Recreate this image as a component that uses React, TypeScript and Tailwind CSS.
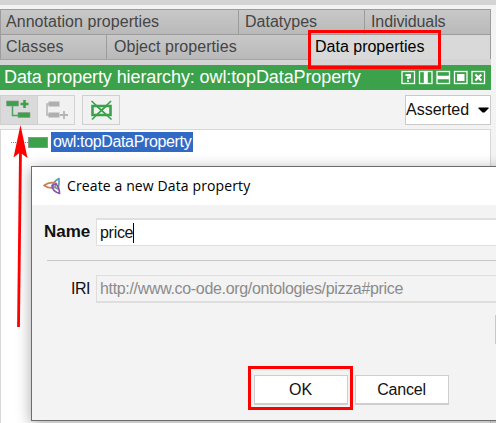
import type { ReactNode } from "react";

function Tab({ className, children }: { className: string; children: ReactNode }) {
  return (
    <div className={`h-full shrink-0 border-t border-l border-[#9c9c9c] bg-linear-to-b from-[#c8c8c8] to-[#b9b9b9] pl-[5px] leading-[24px] whitespace-nowrap text-[#454545] ${className}`}>
      {children}
    </div>
  );
}

function HeaderIcons() {
  return (
    <svg className="mr-[4px] h-[15px] w-[86px] shrink-0" viewBox="0 0 86 15" fill="none" stroke="#fff">
      {[0.5, 18, 35.5, 53, 70.5].map((x) => (
        <rect key={x} x={x + 0.5} y="1.500" width="12.500" height="12" strokeWidth="1.3" />
      ))}
      <path d="M4.500 5h4.500v2.500H7v1.800M7 10.300v1.800" strokeWidth="1.9" />
      <path d="M24.800 2v11" strokeWidth="4" />
      <path d="M36 7.500h12.500" strokeWidth="3.500" />
      <rect x="56.500" y="4.500" width="6.500" height="6" fill="#fff" />
      <path d="M74.300 4.500l6 6m0-6l-6 6" strokeWidth="2.200" />
    </svg>
  );
}

function Toolbar() {
  return (
    <div className="flex h-[39px] shrink-0 items-start bg-[#f3f3f3] pt-[5px]">
      <button className="h-[30px] w-[38px] border border-[#cfcfcf] bg-[#dadada]">
        <svg className="h-[28px] w-[36px]" viewBox="1 96 36 28" fill="none">
          <path d="M12.500 106v9.500H19" stroke="#4da55c" strokeWidth="1.500" />
          <path d="M6.500 101h12v5h-12zM18 112.500h12v5H18z" fill="#3ba14b" stroke="#8c978d" strokeWidth=".6" />
          <path d="M24.500 100v8M20.500 104h8" stroke="#3ba14b" strokeWidth="2.600" />
        </svg>
      </button>
      <button className="h-[30px] w-[37px] border border-l-0 border-[#d2d2d2] bg-[#f1f1f1]">
        <svg className="h-[28px] w-[36px]" viewBox="38 96 36 28" fill="none">
          <path d="M50 104h-3v11h3" stroke="#b4b4b4" strokeWidth="1.500" />
          <path d="M48.500 101.500h11v5h-11zM48.500 112.500h11v5h-11z" fill="#afafaf" />
          <path d="M64 111v8M60 115h8" stroke="#b4b4b4" strokeWidth="1.800" />
        </svg>
      </button>
      <button className="ml-[7px] h-[30px] w-[38px] border border-[#cfcfcf] bg-[#f1f1f1]">
        <svg className="h-[28px] w-[36px]" viewBox="83 96 36 28" fill="none" stroke="#3ba14b">
          <path d="M92.500 106h18v9h-18z" strokeWidth="2.600" />
          <path d="M97 106.500l4.500 4-4.500 4M106 106.500l-4.500 4 4.500 4" strokeWidth="1.300" />
          <path d="M91.500 101l20 18.500M111 101l-19 18.500" strokeWidth="1.700" />
        </svg>
      </button>
      <div className="ml-auto flex h-[30px] w-[86px] items-center border border-[#cacaca] bg-white">
        <span className="text-[16px]">Asserted</span>
        <svg className="ml-auto mr-[1px] h-[6px] w-[11px]" viewBox="0 0 11 6">
          <path d="M.500.5h10v1L6.500 5.500h-2L.500 1.500z" />
        </svg>
      </div>
    </div>
  );
}

function CreateDialog() {
  return (
    <div className="absolute top-[166px] left-[31px] h-[255px] w-[480px] border border-[#6c6c6c] bg-[#f3f3f3] shadow-[0_3px_14px_rgba(0,0,0,0.35)]">
      <div className="flex h-[38px] items-center bg-white pl-[11px]">
        <svg className="h-[18px] w-[18px]" viewBox="0 0 18 18" fill="none" strokeWidth="1.700" strokeLinejoin="round">
          <path d="M16 1.500C12.500 3.500 10 6 9.500 9L15 12c1-3.500 1.300-7 1-10.500z" stroke="#5e9bbd" />
          <path d="M1 8.500C5 5.500 9.500 5 13.500 6.500L12 10.500C8 11.500 5 11 1 8.500z" stroke="#c58357" />
          <path d="M16.500 16.500C12 15 9 12 9 8.500l4-1.500c2.500 2.500 3.500 6 3.500 9.500z" stroke="#8955a9" />
        </svg>
        <span className="-mt-[2px] ml-[6px] font-['Open_Sans',sans-serif] text-[14px] tracking-[0.12px] whitespace-nowrap text-black">Create a new Data property</span>
      </div>
      <div className="mt-[13px] flex h-[28px] items-center">
        <span className="w-[58px] text-right text-[17px] font-bold tracking-[-0.1px]">Name</span>
        <div className="ml-[6px] flex h-[28px] flex-1 items-center border border-[#dfdfdf] border-t-2 bg-white pl-[3px] text-[16px]">
          <span className="tracking-[-0.3px]">price</span>
          <span className="h-[20px] w-px bg-black" />
        </div>
      </div>
      <div className="mt-[14px] ml-[15px] h-px bg-[#c8c8c8]" />
      <div className="mt-[14px] flex h-[28px] items-center">
        <span className="w-[58px] text-right text-[16px] tracking-[-0.5px]">IRI</span>
        <div className="ml-[6px] flex h-[28px] flex-1 items-center border border-[#dedede] border-b-2 pl-[3px] text-[16px] text-[#8b8b8b]">
          <span className="tracking-[-0.33px]">http://www.co-ode.org/ontologies/pizza#price</span>
        </div>
      </div>
      <div className="mt-[12px] ml-[463px] h-[29px] w-[16px] border border-[#c8c8c8] bg-[#e0e0e0]" />
      <div className="mt-[22px] flex h-[44px] items-start">
        <div className="ml-[216px] flex h-[44px] w-[105px] justify-center border-[3px] border-[#ff0000] pt-[6px]">
          <button className="h-[30px] w-[94px] border border-b-2 border-[#cecece] bg-white pt-px text-[16px]">OK</button>
        </div>
        <button className="mt-[9px] ml-[1.5px] h-[30px] w-[94px] border border-b-2 border-[#cecece] bg-white pt-px text-[16px] tracking-[-0.2px]">Cancel</button>
      </div>
    </div>
  );
}

export default function App() {
  return (
    <div className="relative flex h-[423px] w-[496px] flex-col overflow-hidden bg-[#f3f3f3] pr-[5px] font-['Liberation_Sans',Arial,sans-serif] text-[#111]">
      <div className="-mr-[5px] h-[5px] shrink-0 bg-[#d4d4d4]" />
      <div className="mt-[4px] flex h-[25px] shrink-0 border-r border-[#9c9c9c] text-[16px]">
        <Tab className="w-[238px]"><span className="tracking-[0.05px]">Annotation properties</span></Tab>
        <Tab className="w-[126px]"><span className="ml-px">Datatypes</span></Tab>
        <Tab className="w-[126px]"><span className="ml-px tracking-[-0.1px]">Individuals</span></Tab>
      </div>
      <div className="flex h-[31px] shrink-0 bg-[#d4d4d4] text-[16px]">
        <div className="flex h-[26px] w-[308px] border-b border-[#a5a5a5]">
          <Tab className="w-[106px]"><span className="tracking-[0.1px]">Classes</span></Tab>
          <Tab className="w-[202px]"><span className="ml-[2px] tracking-[0.05px]">Object properties</span></Tab>
        </div>
        <div className="h-[25px] flex-1 border-t border-r border-[#9c9c9c] bg-[#d9d9d9] pl-[7px] leading-[24px] text-black"><span>Data properties</span></div>
      </div>
      <div className="flex h-[25px] shrink-0 items-center bg-[#3ba14b] pl-[4px] text-white">
        <span className="flex-1 text-[18px] tracking-[-0.1px] whitespace-nowrap">Data property hierarchy: owl:topDataProperty</span>
        <HeaderIcons />
      </div>
      <Toolbar />
      <div className="flex-1 border border-b-0 border-[#d8d8d8] bg-white pt-[2px]">
        <div className="flex h-[20px] items-center">
          <span className="ml-[10px] w-[17px] border-t border-dotted border-[#888]" />
          <span className="h-[11px] w-[20px] border border-[#8d968e] bg-[#3ba14b]" />
          <span className="ml-[3px] h-[20px] w-[142px] bg-[#316ac5] pl-[2px] text-[16px] leading-[20px] tracking-[-0.35px] whitespace-nowrap text-white">owl:topDataProperty</span>
        </div>
      </div>
      <CreateDialog />
      <div className="absolute top-[30px] left-[308px] h-[39px] w-[133px] border-[3px] border-[#ff0000]" />
      <svg className="absolute top-[125px] left-[10px] h-[204px] w-[20px]" viewBox="10 125 20 204">
        <path d="M20.500 150L18.500 327" stroke="#f00" strokeWidth="2.800" />
        <path d="M20.500 125L27.500 158L20 152.500L13.500 157.500Z" fill="#f00" />
      </svg>
    </div>
  );
}
